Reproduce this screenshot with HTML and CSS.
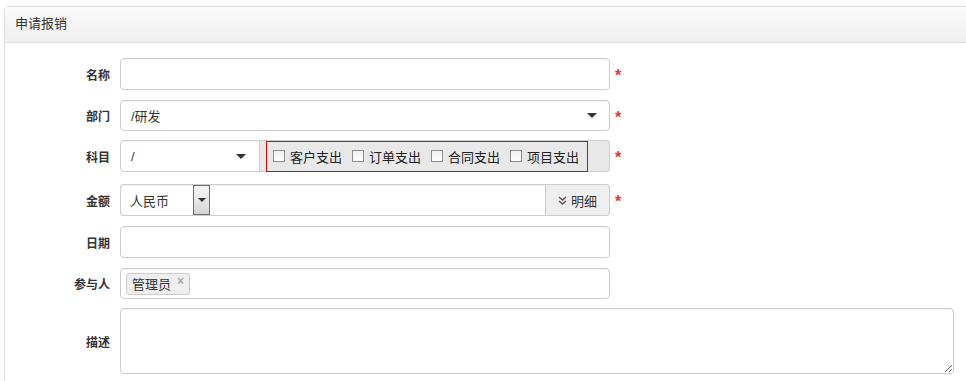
FILE: index.html
```html
<!DOCTYPE html>
<html lang="zh-CN">
<head>
  <meta charset="UTF-8" />
  <title>申请报销</title>
  <link rel="stylesheet" href="styles.css">
</head>
<body>
  <div class="panel">
    <div class="panel-heading">申请报销</div>
    <form class="panel-body">
      <div class="row">
        <label class="row-label">名称</label>
        <div class="control"><input class="field" type="text" /></div>
        <span class="req">*</span>
      </div>

      <div class="row row-thin">
        <label class="row-label">部门</label>
        <div class="control">
          <div class="field select"><span>/研发</span><span class="caret"></span></div>
        </div>
        <span class="req">*</span>
      </div>

      <div class="row row-subject">
        <label class="row-label">科目</label>
        <div class="control group">
          <div class="field select subject"><span>/</span><span class="caret"></span></div>
          <div class="addon checks">
            <div class="check-box">
              <label class="check"><span class="box"></span>客户支出</label>
              <label class="check"><span class="box"></span>订单支出</label>
              <label class="check"><span class="box"></span>合同支出</label>
              <label class="check"><span class="box"></span>项目支出</label>
            </div>
          </div>
        </div>
        <span class="req">*</span>
      </div>

      <div class="row">
        <label class="row-label">金额</label>
        <div class="control group">
          <div class="field currency">
            <span class="currency-text">人民币</span>
            <span class="native-btn"><span class="caret small"></span></span>
          </div>
          <div class="field amount"></div>
          <div class="addon detail">
            <svg width="9" height="9" viewBox="0 0 9 9" fill="none" stroke="#555" stroke-width="1.4"><path d="M1 1l3.5 3 3.5-3M1 5l3.5 3 3.5-3"/></svg>
            明细
          </div>
        </div>
        <span class="req">*</span>
      </div>

      <div class="row">
        <label class="row-label">日期</label>
        <div class="control"><input class="field" type="text" /></div>
      </div>

      <div class="row row-thin">
        <label class="row-label">参与人</label>
        <div class="control">
          <div class="field tags"><span class="tag">管理员<span class="tag-x">×</span></span></div>
        </div>
      </div>

      <div class="row row-tall">
        <label class="row-label">描述</label>
        <div class="control wide"><textarea class="field area"></textarea></div>
      </div>
    </form>
  </div>
</body>
</html>
```

FILE: styles.css
```css
* { box-sizing: border-box; }
body {
  margin: 0;
  overflow: hidden;
  background: #fff;
  color: #333;
  font-family: "Liberation Sans", "Noto Sans CJK SC", sans-serif;
  font-size: 13px;
}
.panel {
  margin: 6px -12px 0 4px;
  border: 1px solid #ddd;
  border-radius: 4px;
}
.panel-heading {
  height: 36px;
  padding: 0 10px;
  line-height: 34px;
  background: linear-gradient(#fafafa, #efefef);
  border-bottom: 1px solid #ddd;
  color: #333;
}
.panel-body { padding: 15px 0 0; }
.row {
  display: flex;
  align-items: center;
  height: 32px;
  margin-bottom: 10px;
}
.row-thin { height: 31px; margin-bottom: 9px; }
.row-subject { margin-bottom: 12px; }
.row-tall { height: 66px; }
.row-label {
  width: 115px;
  padding-right: 10px;
  text-align: right;
  font-size: 12px;
  font-weight: bold;
  color: #333;
}
.control { width: 490px; height: 100%; }
.control.wide { width: 834px; }
.field {
  width: 100%;
  height: 100%;
  border: 1px solid #ccc;
  border-radius: 4px;
  background: #fff;
  box-shadow: inset 0 1px 1px rgba(0, 0, 0, 0.05);
  font: inherit;
  padding: 0 10px;
  outline: none;
}
.select {
  display: flex;
  align-items: center;
  justify-content: space-between;
  color: #333;
}
.caret {
  width: 0;
  height: 0;
  border-left: 5px solid transparent;
  border-right: 5px solid transparent;
  border-top: 5px solid #333;
  margin-right: 2px;
}
.caret.small {
  border-left-width: 4px;
  border-right-width: 4px;
  border-top-width: 4px;
  margin: 0;
}
.req {
  margin-left: 5px;
  color: #e33;
  font-size: 16px;
  font-weight: bold;
  line-height: 1;
  padding-top: 4px;
}
.group { display: flex; }
.group .field { border-radius: 0; }
.subject {
  width: 140px;
  flex: none;
  border-radius: 4px 0 0 4px !important;
  padding-right: 11px;
}
.addon {
  display: flex;
  align-items: center;
  background: #e8e8e8;
  border: 1px solid #ccc;
  border-left: none;
  border-radius: 0 4px 4px 0;
}
.checks { flex: 1; padding-left: 6px; }
.check-box {
  display: flex;
  align-items: center;
  gap: 10px;
  height: 31px;
  padding: 0 8px 0 6px;
  border: 1px solid #e00;
}
.check {
  display: flex;
  align-items: center;
  gap: 5px;
  color: #222;
}
.box {
  width: 12px;
  height: 12px;
  border: 1px solid #8f8f8f;
  background: linear-gradient(#f0f0f0, #fdfdfd);
}
.currency {
  width: 90px;
  flex: none;
  display: flex;
  align-items: center;
  justify-content: space-between;
  padding: 0 0 0 9px;
  border-radius: 4px 0 0 4px !important;
  border-right: none;
}
.native-btn {
  width: 17px;
  height: 100%;
  display: flex;
  align-items: center;
  justify-content: center;
  border: 1px solid #6f6f6f;
  background: linear-gradient(#f6f6f6, #d6d6d6);
}
.amount { flex: 1; border-left: none; }
.detail {
  width: 64px;
  flex: none;
  justify-content: center;
  gap: 4px;
  background: #efefef;
  color: #333;
}
.tags { display: flex; align-items: center; padding: 0 5px; }
.tag {
  display: inline-flex;
  align-items: center;
  height: 22px;
  padding: 0 5px;
  background: #eee;
  border: 1px solid #ccc;
  border-radius: 3px;
  color: #333;
}
.tag-x {
  margin-left: 6px;
  color: #aaa;
  font-weight: bold;
  font-size: 12px;
  margin-top: -6px;
}
.area {
  display: block;
  resize: vertical;
  padding: 6px 10px;
}
```
